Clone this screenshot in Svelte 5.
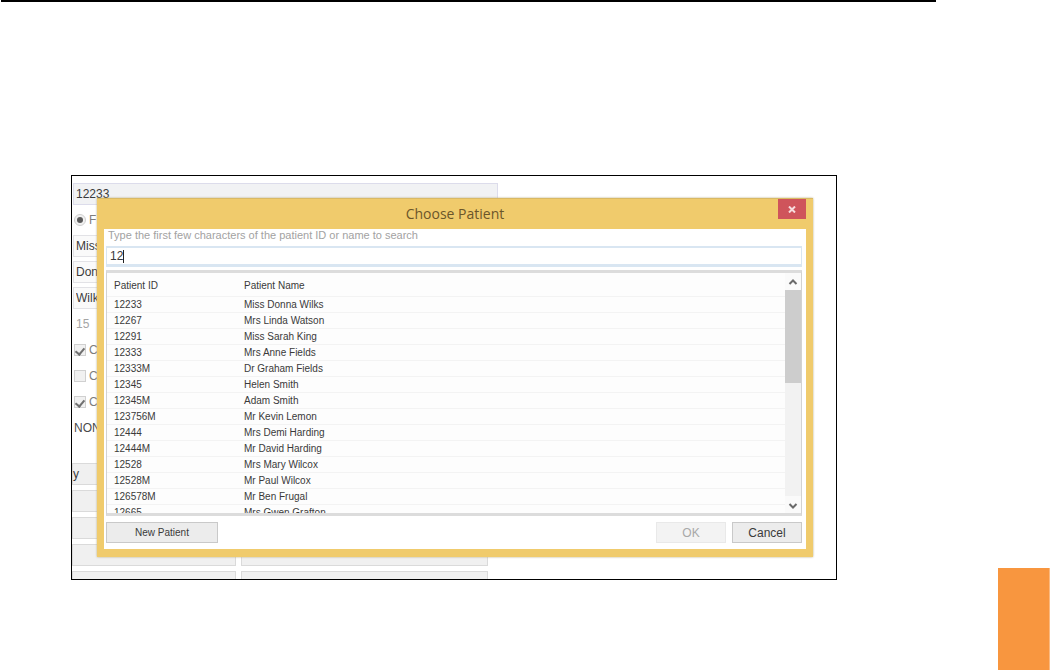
<script lang="ts">
  interface Patient {
    id: string;
    name: string;
  }

  const patients: Patient[] = [
    { id: '12233', name: 'Miss Donna Wilks' },
    { id: '12267', name: 'Mrs Linda Watson' },
    { id: '12291', name: 'Miss Sarah King' },
    { id: '12333', name: 'Mrs Anne Fields' },
    { id: '12333M', name: 'Dr Graham Fields' },
    { id: '12345', name: 'Helen Smith' },
    { id: '12345M', name: 'Adam Smith' },
    { id: '123756M', name: 'Mr Kevin Lemon' },
    { id: '12444', name: 'Mrs Demi Harding' },
    { id: '12444M', name: 'Mr David Harding' },
    { id: '12528', name: 'Mrs Mary Wilcox' },
    { id: '12528M', name: 'Mr Paul Wilcox' },
    { id: '126578M', name: 'Mr Ben Frugal' },
    { id: '12665', name: 'Mrs Gwen Grafton' },
  ];

  let query = $state('12');
  const matches = $derived(
    patients.filter((p) => p.id.startsWith(query) || p.name.toLowerCase().includes(query.toLowerCase()))
  );
  const searchId = $props.id();

  function focusEnd(node: HTMLInputElement) {
    node.focus();
    node.setSelectionRange(node.value.length, node.value.length);
  }
</script>

<div class="page">
  <main>
    <hr />
    <div class="figure">
      <form class="record">
        <input class="field" aria-label="Patient number" value="12233" readonly />
        <label class="option"><input type="radio" name="sex" checked />F</label>
        <input class="field" aria-label="Title" value="Miss" />
        <input class="field" aria-label="First name" value="Donna" />
        <input class="field" aria-label="Surname" value="Wilks" />
        <span class="option date">15</span>
        <label class="option"><input type="checkbox" checked />C</label>
        <label class="option"><input type="checkbox" />C</label>
        <label class="option"><input type="checkbox" checked />C</label>
        <span class="option none">NONE</span>
        <div class="actions">
          <button type="button">y</button>
          <button type="button" aria-label="Action 2"></button>
          <button type="button" aria-label="Action 3"></button>
          <button type="button" aria-label="Action 4"></button>
          <button type="button" aria-label="Action 5"></button>
          <button type="button" aria-label="Action 6"></button>
          <button type="button" aria-label="Action 7"></button>
          <button type="button" aria-label="Action 8"></button>
          <button type="button" aria-label="Action 9"></button>
          <button type="button" aria-label="Action 10"></button>
        </div>
      </form>

      <div class="dialog" role="dialog" aria-labelledby="dialog-title">
        <header>
          <h1 id="dialog-title">Choose Patient</h1>
          <button type="button" class="close" aria-label="Close">
            <svg width="8" height="7" viewBox="0 0 8 7">
              <path d="M1 0.5 L7 6.5 M7 0.5 L1 6.5" stroke="#f7dcdd" stroke-width="2" />
            </svg>
          </button>
        </header>
        <div class="body">
          <label for={searchId}>Type the first few characters of the patient ID or name to search</label>
          <div class="search">
            <input id={searchId} type="text" bind:value={query} use:focusEnd />
            <span class="caret"></span>
          </div>
          <div class="list">
            <div class="rows">
              <table>
                <thead>
                  <tr><th>Patient ID</th><th>Patient Name</th></tr>
                </thead>
                <tbody>
                  {#each matches as patient (patient.id)}
                    <tr><td>{patient.id}</td><td>{patient.name}</td></tr>
                  {/each}
                </tbody>
              </table>
            </div>
            <div class="scrollbar" aria-hidden="true">
              <svg width="16" height="17" viewBox="0 0 16 17">
                <path d="M4.5 11 L8 7.5 L11.5 11" fill="none" stroke="#6a6a6a" stroke-width="2" />
              </svg>
              <div class="track"><div class="thumb"></div></div>
              <svg width="16" height="17" viewBox="0 0 16 17">
                <path d="M4.5 8 L8 11.5 L11.5 8" fill="none" stroke="#6a6a6a" stroke-width="2" />
              </svg>
            </div>
          </div>
          <footer>
            <button type="button" class="new">New Patient</button>
            <button type="button" class="answer" disabled>OK</button>
            <button type="button" class="answer">Cancel</button>
          </footer>
        </div>
      </div>
    </div>
  </main>
  <div class="tab"></div>
</div>

<style>
  :global(body) { margin: 0; background: #fff; }
  .page, .page * { box-sizing: border-box; }
  .page {
    display: grid;
    grid-template-columns: 1fr 52px;
    min-height: 100vh;
    font-family: 'Liberation Sans', Arial, sans-serif;
    font-size: 10px;
    color: #3a3a3a;
  }
  main { min-width: 0; }
  hr {
    height: 2px;
    margin: 0 62px 0 1px;
    border: 0;
    background: #000;
  }
  .tab {
    align-self: end;
    height: 102px;
    border-right: 1px solid #fbb97f;
    background: #f8963f;
  }
  input, button { font-family: inherit; font-size: inherit; color: inherit; }

  .figure {
    position: relative;
    height: 405px;
    margin: 173px 161px 0 71px;
    border: 1px solid #000;
    overflow: hidden;
  }

  /* Record form, behind the dialog */
  .record {
    display: flex;
    flex-direction: column;
    gap: 4px;
    max-width: 426px;
    padding-top: 7px;
    font-size: 12px;
  }
  .field {
    height: 22px;
    margin-left: 1px;
    padding: 0 2px;
    border: 1px solid #e2e2e6;
    background: #fafafa;
  }
  .field:read-only { border-color: #dcdceb; background: #f1f2f4; }
  .option {
    display: flex;
    align-items: center;
    gap: 3px;
    height: 22px;
    padding-left: 2px;
    color: #7d7d7d;
  }
  .option input {
    appearance: none;
    display: grid;
    place-items: center;
    width: 12px;
    height: 12px;
    margin: 0;
    border: 1px solid #d0d0d0;
    background: #f1f1f1;
  }
  .option input[type='radio'] { border-radius: 50%; }
  .option input[type='radio']:checked::before {
    content: '';
    width: 6px;
    height: 6px;
    border-radius: 50%;
    background: #5a5a5a;
  }
  .option input[type='checkbox']:checked::before {
    content: '';
    width: 4px;
    height: 7px;
    border: solid #707070;
    border-width: 0 2px 2px 0;
    transform: rotate(40deg);
  }
  .date { padding-left: 4px; color: #a5a5a5; }
  .none { color: #4a4a4a; }
  .actions {
    display: grid;
    grid-template-columns: 2fr 3fr;
    gap: 5px;
    margin: 20px 10px 0 0;
  }
  .actions button {
    height: 22px;
    padding: 0;
    border: 1px solid #dadada;
    background: #f0f0f0;
    text-align: left;
  }

  /* Dialog window */
  .dialog {
    position: absolute;
    inset: 22px 23px 22px 25px;
    display: flex;
    flex-direction: column;
    padding: 0 7px 8px;
    border-top: 1px solid #d9b964;
    background: #f0cb6c;
    box-shadow: 0 0 2px #b9ab80;
  }
  header {
    display: grid;
    grid-template-columns: 28px 1fr 28px;
    height: 30px;
  }
  h1 {
    grid-column: 2;
    margin: 0;
    font: 400 14px/30px 'Open Sans', sans-serif;
    color: #6b562a;
    text-align: center;
  }
  .close {
    display: grid;
    place-items: center;
    height: 20px;
    padding: 0;
    border: 0;
    background: #cf545b;
  }
  .body {
    flex: 1;
    display: flex;
    flex-direction: column;
    min-height: 0;
    padding: 0 4px 6px 2px;
    background: #fff;
  }
  label[for] {
    height: 17px;
    padding-left: 2px;
    font-size: 11px;
    line-height: 12px;
    color: #a2a2a2;
  }
  .search {
    display: flex;
    align-items: center;
    height: 21px;
    padding: 0 3px;
    border: 1px solid #d9e6f2;
    border-width: 2px 1px 3px;
    background: #fff;
    font-size: 12px;
  }
  .search input {
    field-sizing: content;
    min-width: 0;
    padding: 0;
    border: 0;
    outline: none;
    background: none;
    caret-color: transparent;
  }
  .caret { width: 1px; height: 13px; background: #222; }
  .list {
    flex: 1;
    display: flex;
    min-height: 0;
    margin: 3px 0 6px;
    border: solid;
    border-width: 3px 1px;
    border-color: #dcdcdc #d2d2d2;
    background: #fdfdfd;
  }
  .rows { flex: 1; overflow: hidden; }
  table {
    width: 100%;
    table-layout: fixed;
    border-collapse: collapse;
  }
  th, td {
    height: 16px;
    padding: 0 0 0 7px;
    border-bottom: 1px solid #f3f3f3;
    font-weight: 400;
    line-height: 15px;
    text-align: left;
  }
  th { height: 23px; padding-top: 2px; }
  th:first-child { width: 130px; }
  .scrollbar {
    display: flex;
    flex-direction: column;
    width: 16px;
    background: #fafafa;
  }
  .track { flex: 1; background: #f2f2f2; }
  .thumb { height: 93px; background: #cdcdcd; }

  footer { display: flex; gap: 6px; }
  footer button {
    height: 21px;
    padding: 0;
    border: 1px solid #c9c9c9;
    background: #ececec;
  }
  .new { width: 112px; margin-right: auto; }
  .answer { width: 70px; font-size: 12px; }
  .answer:disabled { border-color: #e9e9e9; background: #f3f3f3; color: #a8a8a8; }
</style>
